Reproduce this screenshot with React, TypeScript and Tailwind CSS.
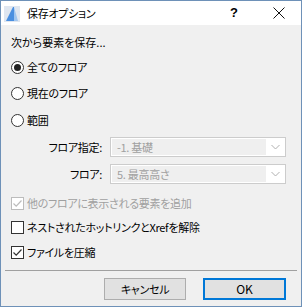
import React from "react";

const font = { fontFamily: '"Noto Sans CJK JP", "Noto Sans", sans-serif' };
const txt = "text-[11px] leading-[16px] tracking-[-0.3px]";

function Radio({ checked, label, className = "" }: { checked?: boolean; label: string; className?: string }) {
  return (
    <div className={`flex items-center h-[16px] ${className}`}>
      <div className="w-[13px] h-[13px] rounded-full border border-[#333333] bg-white flex items-center justify-center shrink-0">
        {checked && <div className="w-[7px] h-[7px] rounded-full bg-[#222222]" />}
      </div>
      <span className={`ml-[3px] ${txt} text-black`}>{label}</span>
    </div>
  );
}

function Check({ checked, disabled, label, className = "" }: { checked?: boolean; disabled?: boolean; label: string; className?: string }) {
  const c = disabled ? "#bcbcbc" : "#333333";
  return (
    <div className={`flex items-center h-[16px] ${className}`}>
      <div
        className={`w-[13px] h-[13px] border flex items-center justify-center shrink-0 ${disabled ? "border-[#bcbcbc] bg-white" : "border-[#333333] bg-white"}`}
      >
        {checked && (
          <svg width="11" height="11" viewBox="0 0 11 11">
            <path d="M1.5 5.5 L4.2 8.2 L9.5 2.5" fill="none" stroke={c} strokeWidth="1.2" />
          </svg>
        )}
      </div>
      <span className={`ml-[3px] ${txt} ${disabled ? "text-[#a0a0a0]" : "text-black"}`}>{label}</span>
    </div>
  );
}

function SelectRow({ label, value, className = "" }: { label: string; value: string; className?: string }) {
  return (
    <div className={`flex items-center ${className}`}>
      <div className={`w-[91px] text-right ${txt} text-black`}>{label}</div>
      <div className="ml-[8px] w-[176px] h-[20px] border border-[#cccccc] bg-white p-[1px] flex">
        <div className={`flex-1 bg-[#efefef] flex items-center pl-[5px] ${txt} text-[#a0a0a0]`}>{value}</div>
        <div className="w-[18px] flex items-center justify-center">
          <svg width="9" height="6" viewBox="0 0 9 6">
            <path d="M0.5 1 L4.5 5 L8.5 1" fill="none" stroke="#b0b0b0" strokeWidth="1" />
          </svg>
        </div>
      </div>
    </div>
  );
}

export default function App() {
  return (
    <div className="w-[302px] h-[307px] border border-[#6e91b8] bg-[#f0f0f0] flex flex-col [font-feature-settings:'palt']" style={font}>
      <div className="h-[24px] bg-white flex items-center shrink-0">
        <svg width="16" height="16" viewBox="0 0 16 16" className="ml-[3px] mt-[1px]">
          <rect x="0" y="0" width="16" height="16" fill="#dfe6f0" />
          <path d="M2 15 L9 1 L10 1 L10 15 Z" fill="#4a8fe0" />
          <path d="M10 1 L14 15 L10 15 Z" fill="#9fc5ef" />
        </svg>
        <span className={`ml-[7px] ${txt} text-black`}>保存オプション</span>
        <span className="ml-auto mr-[35px] text-[13px] leading-[16px] text-black font-bold" style={{ fontFamily: '"Liberation Sans", sans-serif' }}>?</span>
        <svg width="12" height="12" viewBox="0 0 12 12" className="mr-[16px]">
          <path d="M0.5 0.5 L11.5 11.5 M11.5 0.5 L0.5 11.5" stroke="#111" strokeWidth="1" />
        </svg>
      </div>
      <div className="flex flex-col pl-[10px] pr-[5px]">
        <div className="mt-[9px] text-[11px] leading-[16px] text-black">次から要素を保存...</div>
        <Radio checked label="全てのフロア" className="mt-[9px]" />
        <Radio label="現在のフロア" className="mt-[10px]" />
        <Radio label="範囲" className="mt-[11px]" />
        <SelectRow label="フロア指定:" value="-1. 基礎" className="mt-[9px]" />
        <SelectRow label="フロア:" value="5. 最高高さ" className="mt-[7px]" />
        <Check checked disabled label="他のフロアに表示される要素を追加" className="mt-[11px]" />
        <Check label="ネストされたホットリンクとXrefを解除" className="mt-[8px]" />
        <Check checked label="ファイルを圧縮" className="mt-[9px]" />
      </div>
      <div className="mx-[4px] mt-[10px] h-[1px] bg-[#a0a0a0]" />
      <div className="flex justify-end mt-[7px] pr-[15px]">
        <button className={`w-[82px] h-[22px] border border-[#adadad] bg-[#e1e1e1] ${txt} text-black`} style={font}>
          キャンセル
        </button>
        <button className="ml-[17px] w-[83px] h-[22px] border-2 border-[#0078d7] bg-[#e1e1e1] text-[12px] leading-[16px] text-black" style={font}>
          OK
        </button>
      </div>
    </div>
  );
}
